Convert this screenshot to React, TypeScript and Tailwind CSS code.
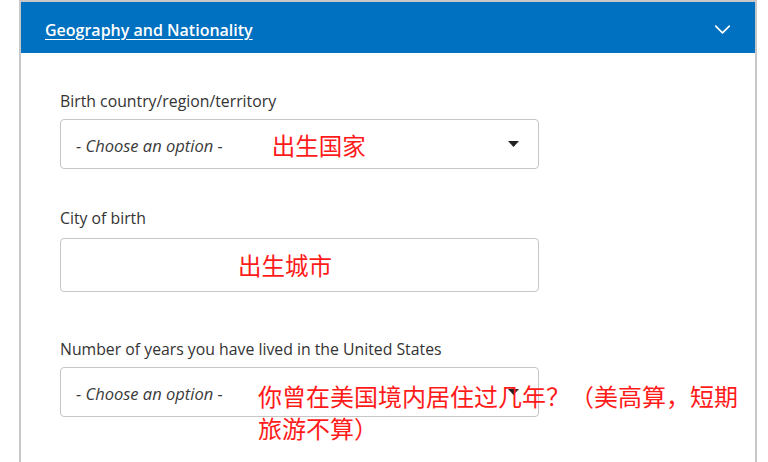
import { ChevronDown } from "lucide-react";

const sans = "font-['Open_Sans','Noto_Sans_CJK_SC',sans-serif]";
const cjk = "font-['Noto_Sans_CJK_SC',sans-serif] text-[#ff1a1a]";

function Caret() {
  return (
    <svg width="11" height="6" viewBox="0 0 11 6" className="shrink-0">
      <path d="M0 0h11L5.5 6z" fill="#222" />
    </svg>
  );
}

function SelectBox({ note }: { note?: string }) {
  return (
    <div className="flex h-[50px] w-[479px] items-center rounded-[4px] border border-[#c6c6c6] bg-white pt-[4px] pr-[19px] pl-[15px]">
      <span className="text-[16.5px] text-[#3a3a3a] italic">- Choose an option -</span>
      {note && <span className={`${cjk} ml-[49px] text-[23.5px] leading-none`}>{note}</span>}
      <span className="ml-auto -mt-[4px]">
        <Caret />
      </span>
    </div>
  );
}

export default function App() {
  return (
    <div className={`${sans} h-[462px] w-[768px] overflow-hidden bg-white`}>
      <div className="ml-[19px] h-full w-[738px] border-x-2 border-t-2 border-[#c8c8c8]">
        <div className="flex h-[51px] items-center justify-between bg-[#0070c0] pt-[4px] pr-[19px] pl-[24px]">
          <span className="text-[16px] font-semibold text-white underline underline-offset-[3px]">
            Geography and Nationality
          </span>
          <ChevronDown size={27} strokeWidth={1.5} color="#ffffff" />
        </div>

        <div className="relative pt-[38px] pl-[39px]">
          <div className="text-[15.8px] leading-[20px] text-[#333]">Birth country/region/territory</div>
          <div className="mt-[8px]">
            <SelectBox note="出生国家" />
          </div>

          <div className="mt-[39px] text-[15.8px] leading-[20px] text-[#333]">City of birth</div>
          <div className="mt-[10px] flex h-[54px] w-[479px] items-center rounded-[4px] border border-[#c6c6c6] bg-white pt-[2px] pl-[177px]">
            <span className={`${cjk} text-[23.5px] leading-none`}>出生城市</span>
          </div>

          <div className="mt-[47px] text-[15.8px] leading-[20px] text-[#333]">
            Number of years you have lived in the United States
          </div>
          <div className="mt-[8px]">
            <SelectBox />
          </div>

          <div className={`${cjk} absolute top-[327px] left-[237px] w-[492px] text-[24px] leading-[32px]`}>
            你曾在美国境内居住过几年？（美高算，短期旅游不算）
          </div>
        </div>
      </div>
    </div>
  );
}
